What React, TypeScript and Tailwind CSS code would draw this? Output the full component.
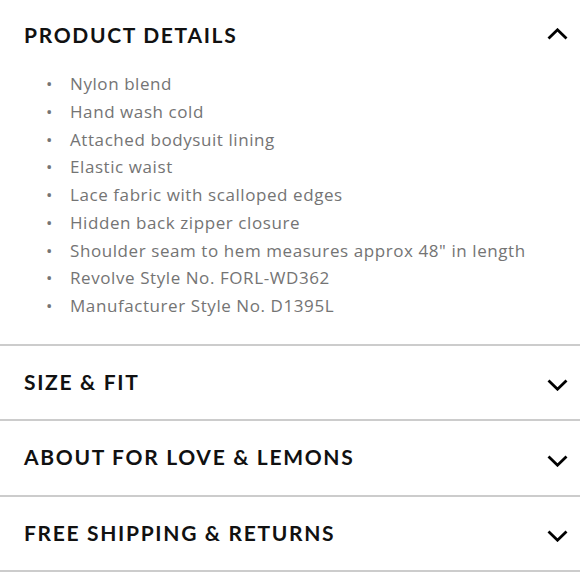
const details = [
  "Nylon blend",
  "Hand wash cold",
  "Attached bodysuit lining",
  "Elastic waist",
  "Lace fabric with scalloped edges",
  "Hidden back zipper closure",
  'Shoulder seam to hem measures approx 48" in length',
  "Revolve Style No. FORL-WD362",
  "Manufacturer Style No. D1395L",
];

const sections = ["SIZE & FIT", "ABOUT FOR LOVE & LEMONS", "FREE SHIPPING & RETURNS"];

const headingFont = { fontFamily: '"Lato", "Liberation Sans", sans-serif' };

function Chevron({ up = false }: { up?: boolean }) {
  return (
    <svg width="21" height="12" viewBox="0 0 21 12" fill="none" className="shrink-0">
      <polyline
        points={up ? "1.5,10.5 10.5,1.8 19.5,10.5" : "1.5,1.5 10.5,10.2 19.5,1.5"}
        stroke="#000"
        strokeWidth="2.8"
        strokeLinecap="butt"
        strokeLinejoin="miter"
      />
    </svg>
  );
}

export default function App() {
  return (
    <div className="w-[580px] h-[580px] bg-white overflow-hidden" style={headingFont}>
      {/* open section */}
      <div className="border-b-2 border-[#cccccc]">
        <div className="flex items-center justify-between pl-6 pr-3 h-[70px]">
          <h2 className="text-[21px] font-bold tracking-[0.08em] text-[#111]">PRODUCT DETAILS</h2>
          <span className="-mt-[2px]">
            <Chevron up />
          </span>
        </div>
        <ul className="pl-[46px] pb-[24px] font-['Open_Sans','Liberation_Sans',sans-serif] text-[17px] leading-[27.75px] tracking-[0.034em] text-[#747474]">
          {details.map((d) => (
            <li key={d} className="flex">
              <span className="w-6 shrink-0">•</span>
              <span>{d}</span>
            </li>
          ))}
        </ul>
      </div>

      {sections.map((s) => (
        <div key={s} className="border-b-2 border-[#cccccc]">
          <div className="flex items-center justify-between pl-6 pr-3 h-[73.5px]">
            <h2 className="text-[21px] font-bold tracking-[0.08em] text-[#111] -mt-[2px]">{s}</h2>
            <span className="mt-[5px]">
              <Chevron />
            </span>
          </div>
        </div>
      ))}
    </div>
  );
}
